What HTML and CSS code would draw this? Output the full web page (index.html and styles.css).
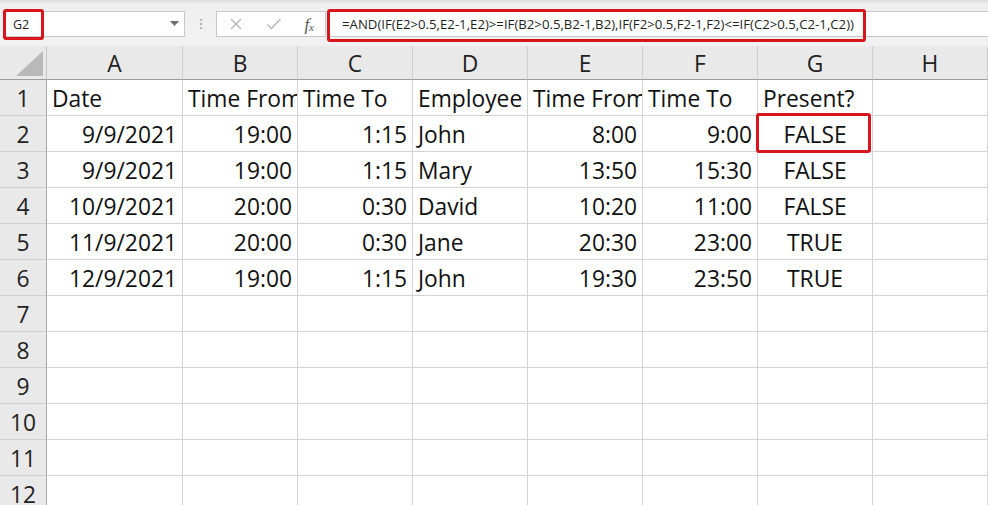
FILE: index.html
```html
<!DOCTYPE html>
<html>
<head>
<meta charset="utf-8">
<link rel="stylesheet" href="styles.css">
</head>
<body>
<div class="app">
  <div class="toolbar">
    <div class="namebox">
      <span class="name">G2</span>
      <svg class="arrow" width="9" height="5" viewBox="0 0 9 5"><path d="M0 0H9L4.5 5Z" fill="#6f6f6f"/></svg>
    </div>
    <div class="dots"><i></i><i></i><i></i></div>
    <div class="fbtns">
      <svg width="14" height="14" viewBox="0 0 14 14"><path d="M2 2L12 12M12 2L2 12" stroke="#b5b5b5" stroke-width="1.4" fill="none"/></svg>
      <svg width="16" height="14" viewBox="0 0 16 14"><path d="M1.5 7.5L5.5 11.5L14.5 2" stroke="#b5b5b5" stroke-width="1.4" fill="none"/></svg>
      <span class="fx">f<sub>x</sub></span>
    </div>
    <div class="formula">=AND(IF(E2&gt;0.5,E2-1,E2)&gt;=IF(B2&gt;0.5,B2-1,B2),IF(F2&gt;0.5,F2-1,F2)&lt;=IF(C2&gt;0.5,C2-1,C2))</div>
    <div class="mark mark-name"></div>
    <div class="mark mark-formula"></div>
  </div>
  <div class="sheet">
    <div class="corner"><svg width="27" height="25" viewBox="0 0 27 25"><path d="M27 0V25H0Z" fill="#b9b9b9"/></svg></div>
    <div class="ch">A</div><div class="ch">B</div><div class="ch">C</div><div class="ch">D</div><div class="ch">E</div><div class="ch">F</div><div class="ch">G</div><div class="ch">H</div>

    <div class="rh">1</div><div class="c">Date</div><div class="c clip">Time From</div><div class="c">Time To</div><div class="c">Employee</div><div class="c clip">Time From</div><div class="c">Time To</div><div class="c">Present?</div><div class="c"></div>
    <div class="rh">2</div><div class="c r">9/9/2021</div><div class="c r">19:00</div><div class="c r">1:15</div><div class="c">John</div><div class="c r">8:00</div><div class="c r">9:00</div><div class="c m">FALSE</div><div class="c"></div>
    <div class="rh">3</div><div class="c r">9/9/2021</div><div class="c r">19:00</div><div class="c r">1:15</div><div class="c">Mary</div><div class="c r">13:50</div><div class="c r">15:30</div><div class="c m">FALSE</div><div class="c"></div>
    <div class="rh">4</div><div class="c r">10/9/2021</div><div class="c r">20:00</div><div class="c r">0:30</div><div class="c">David</div><div class="c r">10:20</div><div class="c r">11:00</div><div class="c m">FALSE</div><div class="c"></div>
    <div class="rh">5</div><div class="c r">11/9/2021</div><div class="c r">20:00</div><div class="c r">0:30</div><div class="c">Jane</div><div class="c r">20:30</div><div class="c r">23:00</div><div class="c m">TRUE</div><div class="c"></div>
    <div class="rh">6</div><div class="c r">12/9/2021</div><div class="c r">19:00</div><div class="c r">1:15</div><div class="c">John</div><div class="c r">19:30</div><div class="c r">23:50</div><div class="c m">TRUE</div><div class="c"></div>
    <div class="rh">7</div><div class="c"></div><div class="c"></div><div class="c"></div><div class="c"></div><div class="c"></div><div class="c"></div><div class="c"></div><div class="c"></div>
    <div class="rh">8</div><div class="c"></div><div class="c"></div><div class="c"></div><div class="c"></div><div class="c"></div><div class="c"></div><div class="c"></div><div class="c"></div>
    <div class="rh">9</div><div class="c"></div><div class="c"></div><div class="c"></div><div class="c"></div><div class="c"></div><div class="c"></div><div class="c"></div><div class="c"></div>
    <div class="rh">10</div><div class="c"></div><div class="c"></div><div class="c"></div><div class="c"></div><div class="c"></div><div class="c"></div><div class="c"></div><div class="c"></div>
    <div class="rh">11</div><div class="c"></div><div class="c"></div><div class="c"></div><div class="c"></div><div class="c"></div><div class="c"></div><div class="c"></div><div class="c"></div>
    <div class="rh">12</div><div class="c"></div><div class="c"></div><div class="c"></div><div class="c"></div><div class="c"></div><div class="c"></div><div class="c"></div><div class="c"></div>
    <div class="mark mark-cell"></div>
  </div>
</div>
</body>
</html>
```

FILE: styles.css
```css
html, body {
  margin: 0;
  padding: 0;
  background: #ffffff;
}
.app {
  width: 988px;
  height: 505px;
  overflow: hidden;
  font-family: "Open Sans", "Noto Sans", sans-serif;
  color: #1a1a1a;
}
.toolbar {
  position: relative;
  height: 46px;
  box-sizing: border-box;
  padding-top: 11px;
  background: linear-gradient(#dcdcdc 0, #efefef 4px, #f1f1f1 100%);
  display: flex;
  align-items: flex-start;
}
.namebox {
  margin-left: 5px;
  width: 180px;
  height: 26px;
  box-sizing: border-box;
  background: #fff;
  border: 1px solid #c8c8c8;
  display: flex;
  align-items: center;
  justify-content: space-between;
  padding: 0 5px 0 7px;
}
.name {
  font-size: 12.5px;
  color: #222;
}
.arrow {
  margin-bottom: 1px;
}
.dots {
  width: 31px;
  height: 26px;
  display: flex;
  flex-direction: column;
  align-items: center;
  justify-content: center;
  gap: 2px;
}
.dots i {
  display: block;
  width: 2px;
  height: 2px;
  background: #b4b4b4;
}
.fbtns {
  width: 110px;
  height: 26px;
  box-sizing: border-box;
  background: #fff;
  border: 1px solid #c8c8c8;
  display: flex;
  align-items: center;
  justify-content: space-between;
  padding: 0 11px 0 12px;
}
.fx {
  font-family: "Liberation Serif", serif;
  font-style: italic;
  font-size: 17px;
  color: #555;
  line-height: 1;
}
.fx sub {
  font-size: 11px;
  vertical-align: -1px;
}
.formula {
  flex: 1;
  margin-left: 2px;
  height: 26px;
  box-sizing: border-box;
  background: #fff;
  border: 1px solid #c8c8c8;
  border-right: none;
  padding-left: 13px;
  font-size: 13.2px;
  line-height: 24px;
  color: #1e1e1e;
  white-space: nowrap;
}
.mark {
  position: absolute;
  box-sizing: border-box;
  border: 3.5px solid #d8141c;
  border-radius: 3px;
  pointer-events: none;
}
.mark-name {
  left: 3px;
  top: 9px;
  width: 41px;
  height: 31px;
}
.mark-formula {
  left: 327px;
  top: 9px;
  width: 539px;
  height: 33px;
}
.sheet {
  position: relative;
  display: grid;
  grid-template-columns: 47px 136px repeat(7, 115px);
  grid-template-rows: 34px repeat(12, 36px);
  font-size: 22.8px;
}
.corner {
  background: #e9e9e9;
  border-right: 1px solid #c6c6c6;
  border-bottom: 1px solid #9e9e9e;
  display: flex;
  align-items: flex-end;
  justify-content: flex-end;
  padding: 0 3px 3px 0;
}
.ch {
  background: #e9e9e9;
  border-right: 1px solid #cfcfcf;
  border-bottom: 1px solid #9e9e9e;
  display: flex;
  align-items: center;
  justify-content: center;
  color: #222;
  padding-top: 2px;
}
.rh {
  background: #e9e9e9;
  border-right: 1px solid #a8a8a8;
  border-bottom: 1px solid #cfcfcf;
  display: flex;
  align-items: center;
  justify-content: center;
  color: #222;
  padding-top: 2px;
}
.c {
  border-right: 1px solid #d4d4d4;
  border-bottom: 1px solid #d4d4d4;
  display: flex;
  align-items: center;
  padding: 2px 5px 0 5px;
  white-space: nowrap;
  overflow: hidden;
  color: #111;
}
.c.clip {
  padding-right: 0;
}
.c.r {
  justify-content: flex-end;
}
.c.m {
  justify-content: center;
}
.mark-cell {
  left: 756px;
  top: 67px;
  width: 115px;
  height: 40px;
}
```
